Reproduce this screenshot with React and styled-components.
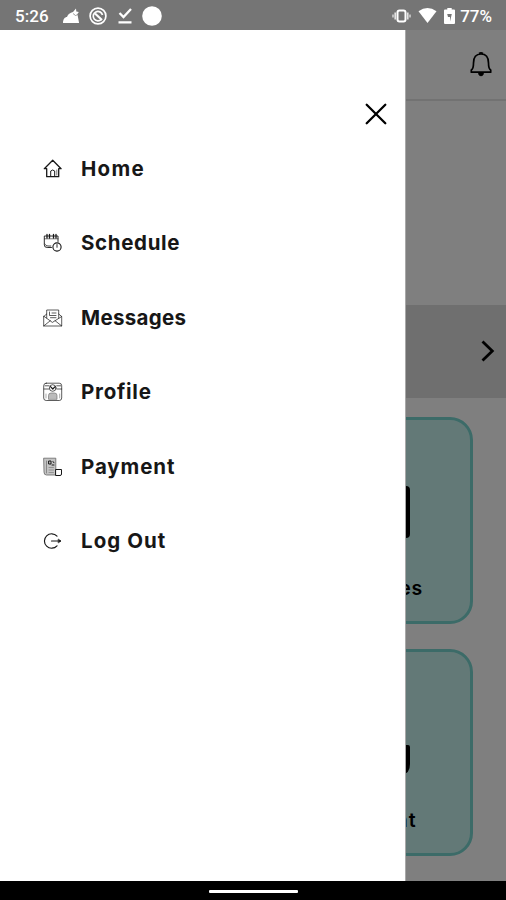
import React from "react";
import styled, { createGlobalStyle } from "styled-components";

const GlobalStyle = createGlobalStyle`
  * {
    box-sizing: border-box;
  }
  body {
    margin: 0;
    font-family: Inter, "Liberation Sans", sans-serif;
  }
`;

const Screen = styled.div`
  display: flex;
  flex-direction: column;
  width: 506px;
  height: 900px;
  overflow: hidden;
  background-color: white;
`;

const StatusBar = styled.div`
  height: 30px;
  display: flex;
  align-items: center;
  padding: 1px 14px 0 15px;
  background-color: #757575;
  color: white;
`;

const StatusText = styled.span`
  font-family: Roboto, sans-serif;
  font-size: 17px;
  font-weight: 500;
  line-height: 28px;
  letter-spacing: ${(props) => props.$spacing || "0"};
`;

const StatusIcons = styled.div`
  display: flex;
  align-items: center;
  gap: ${(props) => props.$gap};
  margin-left: ${(props) => props.$left};
  margin-right: ${(props) => props.$right || "0"};
`;

const Body = styled.div`
  flex: 1;
  position: relative;
  overflow: hidden;
`;

const Page = styled.div`
  height: 100%;
  display: flex;
  flex-direction: column;
`;

const Header = styled.div`
  height: 71px;
  display: flex;
  justify-content: flex-end;
  padding: 21px 13px 0 0;
  border-bottom: 2px solid #e4e4e4;
`;

const Banner = styled.div`
  height: 93px;
  margin-top: 204px;
  display: flex;
  align-items: center;
  justify-content: flex-end;
  padding: 0 10px 1px 0;
  background-color: #dedede;
`;

const Cards = styled.div`
  display: flex;
  flex-direction: column;
  align-items: flex-end;
  gap: 25px;
  padding: 19px 33px 0 0;
`;

const Card = styled.div`
  width: 202px;
  height: 207px;
  display: flex;
  flex-direction: column;
  align-items: center;
  justify-content: flex-end;
  padding-bottom: 21px;
  border: 3px solid #78d6d0;
  border-radius: 23px;
  background-color: #c6f3ef;
`;

const CardLabel = styled.div`
  margin-top: ${(props) => props.$top};
  font-size: 19.5px;
  font-weight: 600;
  line-height: 24px;
  letter-spacing: ${(props) => props.$spacing};
`;

const Scrim = styled.div`
  position: absolute;
  inset: 0;
  background-color: rgba(0, 0, 0, 0.5);
`;

const Drawer = styled.div`
  position: absolute;
  top: 0;
  bottom: 0;
  left: 0;
  width: 405px;
  display: flex;
  flex-direction: column;
  background-color: white;
  box-shadow: 1px 0 0 #a8a8a8;
`;

const CloseButton = styled.button`
  align-self: flex-end;
  display: flex;
  margin: 73px 18px 0 0;
  padding: 0;
  border: 0;
  background: none;
  cursor: pointer;
`;

const Menu = styled.nav`
  display: flex;
  flex-direction: column;
  padding: 25px 0 0 43px;
`;

const MenuItem = styled.a`
  height: 37px;
  margin-bottom: 37.5px;
  display: flex;
  align-items: center;
  gap: 18px;
  color: #171717;
  cursor: pointer;
`;

const MenuLabel = styled.span`
  font-size: 20.5px;
  font-weight: 700;
  line-height: 24px;
  letter-spacing: ${(props) => props.$spacing};
`;

const NavBar = styled.div`
  height: 19px;
  display: flex;
  justify-content: center;
  padding-top: 9px;
  background-color: black;
`;

const HomeHandle = styled.div`
  width: 89px;
  height: 3px;
  border-radius: 1px;
  background-color: white;
`;

const Icon = ({ size = 20, width = 1, children }) => (
  <svg
    width={size}
    height={size}
    viewBox="0 0 20 20"
    fill="none"
    stroke="currentColor"
    strokeWidth={width}
    strokeLinecap="round"
    strokeLinejoin="round"
  >
    {children}
  </svg>
);

const HomeIcon = () => (
  <Icon width={1.3}>
    <path d="M1.300 9.700 9.700 1.300l8.400 8.400H15.700v8H3.700v-8z" />
    <path d="M7.700 17.500V12q2-2 4 0v5.500" strokeWidth="1" />
    <path d="M13.800 11v5" strokeWidth=".6" />
  </Icon>
);

const ScheduleIcon = () => (
  <Icon width={0.9}>
    <path d="M8.500 14.500H4.200Q1 14.500 1.300 11.500V3H15v5.500" />
    <path d="M1.500 5.800H15" strokeWidth=".6" />
    <path d="M4 1.500V5M6.500 1.500V5M10.500 1.500V5M13 1.500V5" strokeWidth="1.3" />
    <path d="M1.800 11c1 2.500 4 2 6 2" />
    <circle cx="14" cy="14" r="4.100" fill="white" strokeWidth="1.100" />
    <path d="M14 11.500V14.300" />
  </Icon>
);

const MessagesIcon = () => (
  <Icon width={0.7}>
    <path d="M.7 8.500V18h18V8.500L9.700 14.200z" />
    <path d="m.7 18 6.600-5.300M18.700 18l-6.600-5.300M.7 8.500l3-2.500M18.700 8.500l-3-2.500" />
    <path d="M3.700 10V2h12v8M6.500 4v3.500h6.500M9 5h4M7.500 9.700H13" />
  </Icon>
);

const ProfileIcon = () => (
  <Icon width={0.7}>
    <rect x=".7" y="1.200" width="18" height="17.300" rx="2.500" />
    <path d="M1 7h5M13.700 7h5M2 3.800h4M13.700 3.800h4" />
    <circle cx="9.700" cy="6" r="3.300" />
    <path d="m7.500 4.700 2.300 2.300 2.300-2.300" strokeWidth="1.200" />
    <path d="M5.500 17v-3.500q0-2.500 2.500-2.500h3.500q2.500 0 2.500 2.500V17z" fill="#bbb" stroke="#777" />
    <path d="M3 12v4M16.700 12v4" stroke="#888" />
  </Icon>
);

const PaymentIcon = () => (
  <Icon width={0.8}>
    <path d="M1 1.200h11.800V18H3.500Q1 18 1 15.500z" fill="#c4c4c4" stroke="#666" />
    <path d="M3.500 4v12" stroke="#777" />
    <path d="M6 4h2v3H6zM10 4.500l1 1.300M9 8h2" strokeWidth="1" />
    <path d="M6 10.500h4.500M6 13h4.500M6 15.500h4.500" stroke="#888" />
    <path d="M13 12.500h5.500V17q0 1.500-1.500 1.500h-4z" fill="white" strokeWidth="1" />
  </Icon>
);

const LogOutIcon = () => (
  <Icon width={1.15}>
    <path d="M14 5.200A7.200 7.200 0 1 0 14 14.800" />
    <path d="M8.500 10h9" />
    <path d="m15.500 8.200 2.500 1.800-2.500 1.800z" fill="currentColor" strokeWidth=".6" />
  </Icon>
);

const menuItems = [
  { label: "Home", icon: HomeIcon, spacing: "1.3px" },
  { label: "Schedule", icon: ScheduleIcon, spacing: "0.65px" },
  { label: "Messages", icon: MessagesIcon, spacing: "0.3px" },
  { label: "Profile", icon: ProfileIcon, spacing: "0.75px" },
  { label: "Payment", icon: PaymentIcon, spacing: "0.9px" },
  { label: "Log Out", icon: LogOutIcon, spacing: "1.05px" },
];

const App = () => {
  return (
    <>
      <GlobalStyle />
      <Screen>
        <StatusBar>
          <StatusText $spacing="0.1px">5:26</StatusText>
          <StatusIcons $gap="9.5px" $left="13px">
            <svg width="18" height="18" viewBox="0 0 18 18" fill="white">
              <path d="M1 16c0-4 2-6 4-6 1-3 3-4 6-5l3-3.500.3 3 2.500.5-1.400 2 1.700 9z" />
              <path d="m11 6.500 2.500 2 2.500-1" fill="none" stroke="#757575" strokeWidth=".7" />
            </svg>
            <svg width="18" height="18" viewBox="0 0 18 18" fill="none" stroke="white" strokeWidth="1.7">
              <circle cx="9" cy="9" r="7.9" />
              <path d="M12.500 12.200A4.700 4.700 0 1 1 13.500 8" />
              <path d="M6 6.500 13 13" strokeWidth="2.200" />
            </svg>
            <svg width="16" height="18" viewBox="0 0 16 18" fill="none" stroke="white" strokeWidth="2.3">
              <path d="m2.500 6 4 4 7.500-8M1.500 15.300h13" />
            </svg>
            <svg width="20" height="20" viewBox="0 0 20 20">
              <circle cx="10" cy="10" r="9.8" fill="white" />
            </svg>
          </StatusIcons>
          <StatusIcons $gap="7px" $left="auto" $right="5px">
            <svg width="19" height="14" viewBox="0 0 19 14" fill="none" stroke="white">
              <rect x="5.500" y="1.500" width="8" height="11" rx="2" strokeWidth="2" />
              <path d="M3.200 3.500v7M15.800 3.500v7" strokeWidth="1.600" opacity=".8" />
              <path d="M1 5.500v3M18 5.500v3" strokeWidth="1.300" opacity=".8" />
            </svg>
            <svg width="19" height="15" viewBox="0 0 19 15" fill="white">
              <path d="M.5 3.2Q9.500-3 18.500 3.200L9.500 15z" />
            </svg>
            <svg width="11" height="16" viewBox="0 0 11 16" fill="white">
              <path d="M3.300 0h4.400v1.600H10q1 0 1 1V15q0 1-1 1H1q-1 0-1-1V2.600q0-1 1-1h2.300z" />
              <path d="M3.200 6h4.600L6 13.500V9H4z" fill="#757575" />
            </svg>
          </StatusIcons>
          <StatusText>77%</StatusText>
        </StatusBar>
        <Body>
          <Page>
            <Header>
              <svg width="24" height="27" viewBox="0 0 24 27" fill="none" stroke="black" strokeWidth="1.7" strokeLinejoin="round">
                <path d="M2.300 21.200V19Q4.500 18 4.500 12 4.500 3 12 3t7.500 9q0 6 2.200 7v2.200z" />
                <path d="M10 2.500q2-1.200 4 0" />
                <path d="M9.500 22.500h5q-.5 2.300-2.500 2.300t-2.500-2.300z" fill="black" strokeWidth="1" />
              </svg>
            </Header>
            <Banner>
              <svg width="16" height="22" viewBox="0 0 16 22" fill="none" stroke="black" strokeWidth="2.8">
                <path d="m2.500 1.500 9.800 9.500-9.800 9.500" />
              </svg>
            </Banner>
            <Cards>
              <Card>
                <svg width="76" height="52" viewBox="0 0 76 52" fill="none" stroke="black" strokeWidth="4">
                  <rect x="2" y="2" width="72" height="48" rx="2" />
                  <path d="m2 2 36 28L74 2" />
                </svg>
                <CardLabel $top="38px" $spacing="0.65px">Messages</CardLabel>
              </Card>
              <Card>
                <svg width="76" height="52" viewBox="0 0 76 52" fill="none" stroke="black" strokeWidth="4" strokeLinejoin="round">
                  <path d="M66 25h8v17q0 8-6 8H8q-6 0-6-6V2h60v23" />
                </svg>
                <CardLabel $top="34px" $spacing="0.9px">Payment</CardLabel>
              </Card>
            </Cards>
          </Page>
          <Scrim />
          <Drawer>
            <CloseButton aria-label="Close">
              <svg width="22" height="22" viewBox="0 0 22 22" stroke="black" strokeWidth="2.3" strokeLinecap="round">
                <path d="m1.700 1.700 18.600 18.600M20.300 1.700 1.700 20.300" />
              </svg>
            </CloseButton>
            <Menu>
              {menuItems.map(({ label, icon: ItemIcon, spacing }) => (
                <MenuItem key={label}>
                  <ItemIcon />
                  <MenuLabel $spacing={spacing}>{label}</MenuLabel>
                </MenuItem>
              ))}
            </Menu>
          </Drawer>
        </Body>
        <NavBar>
          <HomeHandle />
        </NavBar>
      </Screen>
    </>
  );
};

export default App;
